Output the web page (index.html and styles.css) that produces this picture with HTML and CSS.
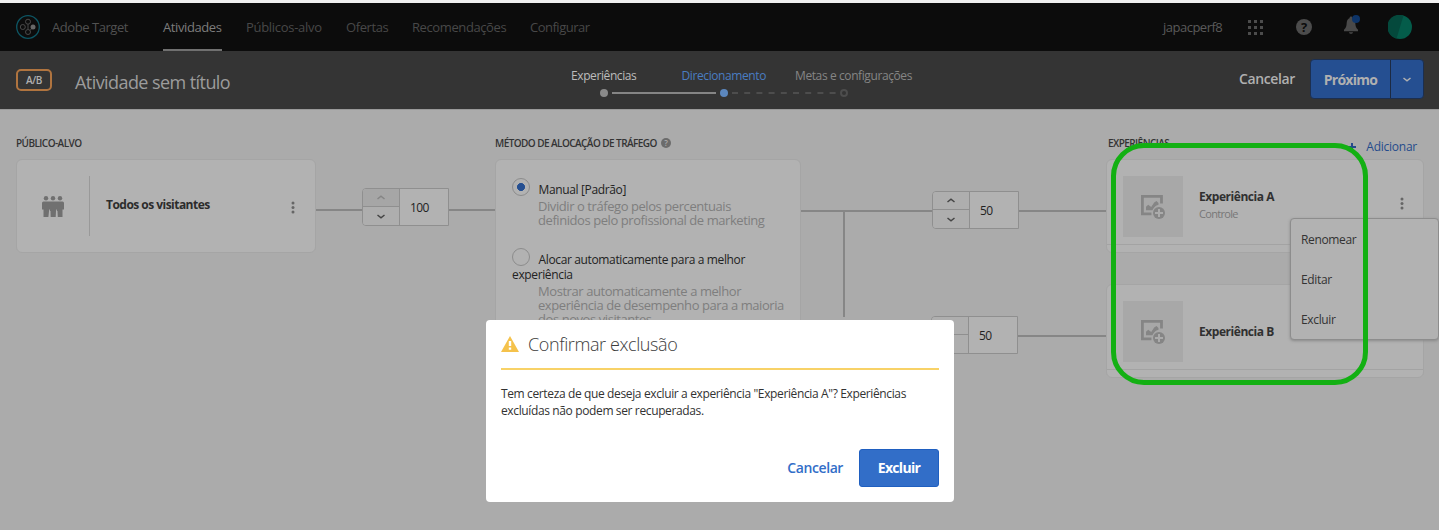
FILE: index.html
```html
<!DOCTYPE html>
<html lang="pt-BR">
<head>
<meta charset="utf-8">
<title>Adobe Target</title>
<link rel="stylesheet" href="styles.css">
</head>
<body>
<svg class="sprite" width="0" height="0">
  <symbol id="image-add" viewBox="0 0 24 24">
    <path fill="none" stroke="#858585" stroke-width="2.800" d="M10.5 18.9H1.4V1.4h19.1v7.2"/>
    <path fill="#858585" d="M5 15.200v-3.400l2.200-2 3 2.200 3-4.400 2.300-1.600 2 2v1.800c-3 .8-4.800 2.500-5.200 5.400z"/>
    <circle cx="18" cy="18" r="7.200" fill="#a8a8a8"/>
    <circle cx="18" cy="18" r="6" fill="#858585"/>
    <path stroke="#ababab" stroke-width="2" d="M18 14v8M14 18h8"/>
  </symbol>
  <symbol id="up" viewBox="0 0 8 5"><path fill="none" stroke="currentColor" stroke-width="1.500" d="M.5 4 4 1.200l3.500 2.800"/></symbol>
  <symbol id="down" viewBox="0 0 8 5"><path fill="none" stroke="currentColor" stroke-width="1.500" d="M.5 1 4 3.800 7.500 1"/></symbol>
  <symbol id="dots" viewBox="0 0 4 13"><g fill="#666"><circle cx="2" cy="2" r="1.500"/><circle cx="2" cy="6.500" r="1.500"/><circle cx="2" cy="11" r="1.500"/></g></symbol>
</svg>

<header class="topbar">
  <svg class="logo" viewBox="0 0 24 24" fill="none">
    <circle cx="12" cy="12" r="11.300" stroke="#0d5563" stroke-width="1.300"/>
    <g stroke="#4a4a4a" stroke-width="1"><circle cx="12" cy="6.700" r="2.500"/><circle cx="6.800" cy="12" r="2.500"/><circle cx="12" cy="17" r="2.500"/><path d="M12 9.200v5M14 15.400l1.500-1.600"/></g>
    <circle cx="17" cy="12" r="2.500" fill="#686868"/>
  </svg>
  <span class="brand">Adobe Target</span>
  <nav class="nav">
    <a class="nav-item active n1">Atividades</a><a class="nav-item n2">Públicos-alvo</a><a class="nav-item n3">Ofertas</a><a class="nav-item n4">Recomendações</a><a class="nav-item n5">Configurar</a>
  </nav>
  <span class="user">japacperf8</span>
  <svg class="apps" viewBox="0 0 15 15" fill="#4c4c4c"><path d="M0 0h3v3H0zM6 0h3v3H6zM12 0h3v3h-3zM0 6h3v3H0zM6 6h3v3H6zM12 6h3v3h-3zM0 12h3v3H0zM6 12h3v3H6zM12 12h3v3h-3z"/></svg>
  <span class="help">?</span>
  <svg class="bell" viewBox="0 0 18 20"><path fill="#494949" d="M2 14.800c2.200-2 2.500-3.800 2.700-7C4.900 5 6 3.800 7.500 3.200 7.500 1 10.500 1 10.500 3.200c1.500.6 2.600 1.800 2.800 4.600.2 3.200.5 5 2.700 7v1.400H2zM7 17.300h4c-.3 2-3.700 2-4 0z"/><circle cx="14" cy="4" r="4" fill="#0d3468"/></svg>
  <svg class="avatar" viewBox="0 0 24 24"><circle cx="12" cy="12" r="12" fill="#045c4a"/><path fill="#04493c" d="M15.500.6A12 12 0 1 0 8.500 23.500z"/></svg>
</header>

<section class="titlebar">
  <span class="badge">A/B</span>
  <h1 class="title">Atividade sem título</h1>
  <div class="steps">
    <div class="step-labels"><span class="s1">Experiências</span><span class="s2">Direcionamento</span><span class="s3">Metas e configurações</span></div>
    <div class="track"><i class="dot"></i><i class="solid"></i><i class="dot current"></i><svg class="dash" viewBox="0 0 104 2"><path stroke="#4d4d4d" stroke-width="2" stroke-dasharray="6 6.200" d="M0 1h104"/></svg><i class="dot todo"></i></div>
  </div>
  <span class="cancel">Cancelar</span>
  <div class="split"><span class="next">Próximo</span><span class="more"><svg width="8" height="5"><use href="#down"/></svg></span></div>
</section>

<main class="flow">
  <section class="col-audience">
    <h2 class="label">PÚBLICO-ALVO</h2>
    <div class="card audience">
      <div class="people"><svg width="22" height="21" viewBox="0 0 22 21" fill="#707070"><circle cx="4" cy="2.300" r="2.200"/><circle cx="11" cy="2.300" r="2.200"/><circle cx="18" cy="2.300" r="2.200"/><path d="M1.500 5.500h19q1.500 0 1.500 1.500v6.500h-1.500V21h-5v-6h-.8v6H8.500v-6h-.8v6H1.500v-7.500H0V7q0-1.500 1.500-1.500z"/><path fill="#b2b2b2" d="M7.200 13.500h.7l.4 7.500H6.400zM14.100 13.500h.7l.8 7.500h-1.900z"/></svg></div>
      <strong class="audience-name">Todos os visitantes</strong>
      <svg class="menu-dots" width="4" height="13"><use href="#dots"/></svg>
    </div>
  </section>

  <div class="link-in">
    <div class="spinner"><div class="arrows"><span class="disabled"><svg width="8" height="5"><use href="#up"/></svg></span><span><svg width="8" height="5"><use href="#down"/></svg></span></div><span class="value">100</span></div>
  </div>

  <section class="col-method">
    <h2 class="label">MÉTODO DE ALOCAÇÃO DE TRÁFEGO <span class="mini-help">?</span></h2>
    <div class="card method">
      <div class="option"><i class="radio on"></i><span>Manual [Padrão]</span></div>
      <p class="hint">Dividir o tráfego pelos percentuais<br>definidos pelo profissional de marketing</p>
      <div class="option second"><i class="radio"></i><span>Alocar automaticamente para a melhor</span><br><span>experiência</span></div>
      <p class="hint">Mostrar automaticamente a melhor<br>experiência de desempenho para a maioria<br>dos novos visitantes</p>
    </div>
  </section>

  <div class="links-out">
    <div class="branch first">
      <div class="spinner"><div class="arrows"><span><svg width="8" height="5"><use href="#up"/></svg></span><span><svg width="8" height="5"><use href="#down"/></svg></span></div><span class="value">50</span></div>
    </div>
    <div class="stem"></div>
    <div class="branch last">
      <div class="spinner"><div class="arrows"><span><svg width="8" height="5"><use href="#up"/></svg></span><span><svg width="8" height="5"><use href="#down"/></svg></span></div><span class="value">50</span></div>
    </div>
  </div>

  <section class="col-exp">
    <div class="exp-head"><h2 class="label">EXPERIÊNCIAS</h2><span class="add"><svg width="8" height="8"><path stroke="#254b8c" stroke-width="2" d="M4 0v8M0 4h8"/></svg><span>Adicionar</span></span></div>
    <div class="card exp">
      <div class="exp-body"><div class="thumb"><svg width="24" height="24"><use href="#image-add"/></svg></div><div class="exp-text"><strong>Experiência A</strong><small>Controle</small></div><svg class="exp-dots" width="4" height="13"><use href="#dots"/></svg></div>
    </div>
    <div class="card exp">
      <div class="exp-body"><div class="thumb"><svg width="24" height="24"><use href="#image-add"/></svg></div><div class="exp-text"><strong>Experiência B</strong></div></div>
    </div>
  </section>
</main>

<ul class="menu"><li>Renomear</li><li>Editar</li><li>Excluir</li></ul>
<div class="highlight"></div>

<div class="dialog" role="dialog">
  <div class="dialog-head"><svg width="18" height="16" viewBox="0 0 18 16"><path fill="#f5c24b" d="M9 0l9 16H0z"/><path fill="#fff" d="M7.800 5h2.400v5H7.800zM7.800 11.600h2.400v2.200H7.800z"/></svg><span>Confirmar exclusão</span></div>
  <p class="dialog-text">Tem certeza de que deseja excluir a experiência "Experiência A"? Experiências<br>excluídas não podem ser recuperadas.</p>
  <div class="dialog-actions"><span class="dialog-cancel">Cancelar</span><span class="dialog-delete">Excluir</span></div>
</div>
</body>
</html>
```
FILE: styles.css
```css
* { box-sizing: border-box; }
body {
  margin: 0; height: 530px; overflow: hidden; position: relative;
  display: flex; flex-direction: column;
  background: #ababab; color: #2c2c2c;
  font: 13px/15px "Open Sans", "Noto Sans", sans-serif; letter-spacing: -0.4px;
  white-space: nowrap;
}
h1, h2, p, ul { margin: 0; padding: 0; }
svg, i { display: block; flex: none; }
.sprite { position: absolute; }

.topbar { flex: none; height: 51px; border-top: 3px solid #f0f0f0; background: #0c0c0c; display: flex; align-items: center; padding: 0 27px 0 16px; color: #484848; }
.logo { width: 24px; height: 24px; }
.brand { width: 111px; padding-left: 12px; color: #515151; letter-spacing: -0.45px; }
.nav { display: flex; align-self: stretch; gap: 24px; margin-left: 12px; flex: 1; }
.nav-item { height: 48px; line-height: 48px; }
.nav-item.active { color: #7c7c7c; border-bottom: 2px solid #707070; }
.n1 { width: 59px; } .n2 { width: 76px; letter-spacing: -0.3px; } .n3 { width: 42px; } .n4 { width: 94px; } .n5 { width: 60px; letter-spacing: -0.5px; }
.user { width: 85px; color: #5a5a5a; letter-spacing: -0.5px; }
.apps { width: 15px; height: 15px; }
.help { width: 16px; height: 16px; margin-left: 33px; border-radius: 50%; background: #4c4c4c; color: #0c0c0c; font-weight: 700; text-align: center; line-height: 16px; }
.bell { width: 18px; height: 20px; margin: -4px 0 0 30px; }
.avatar { width: 24px; height: 24px; margin-left: 28px; }

.titlebar { flex: none; height: 59px; background: #343434; border-bottom: 1px solid #999; display: flex; padding: 0 15px 0 16px; color: #b0b0b0; }
.badge { flex: none; width: 36px; height: 22px; margin-top: 18px; border: 2px solid #b0743f; border-radius: 5px; font-size: 10px; font-weight: 600; line-height: 18px; text-align: center; }
.title { flex: none; width: 496px; padding-left: 23px; font-size: 18px; font-weight: 400; line-height: 62px; letter-spacing: -0.57px; color: #9c9c9c; }
.steps { flex: none; width: 341px; margin: 17px 0 0 23px; font-size: 12px; }
.step-labels { display: flex; }
.step-labels span { flex: none; }
.s1 { width: 110.5px; color: #bcbcbc; } .s2 { width: 113.5px; color: #4a7dc2; } .s3 { color: #858585; }
.track { display: flex; align-items: center; margin: 6px 0 0 29px; }
.dot { width: 8px; height: 8px; border-radius: 50%; background: #8a8a8a; }
.current { background: #5c87bd; }
.todo { background: none; border: 2px solid #4d4d4d; }
.solid { width: 104px; height: 2px; margin: 0 4px; background: #858585; }
.dash { width: 104px; height: 2px; margin: 0 4px; }
.cancel { flex: none; width: 71px; margin-left: 327px; font-size: 14px; font-weight: 600; line-height: 55px; }
.split { flex: none; display: flex; width: 114px; height: 40px; margin-top: 8px; border: 1px solid #1c2f50; border-radius: 4px; overflow: hidden; background: #254f91; }
.next { width: 80px; border-right: 1px solid #1c2a42; text-align: center; font-size: 14px; font-weight: 700; line-height: 40px; letter-spacing: -0.7px; }
.more { flex: 1; display: grid; place-items: center; }

.flow { flex: 1; display: flex; padding: 27px 0 0 16px; }
.label { height: 22px; font-size: 10px; font-weight: 600; line-height: 13px; letter-spacing: -0.56px; color: #333; }
.card { background: #b2b2b2; border: 1px solid #a5a5a5; border-radius: 6px; }
.col-audience { width: 300px; }
.audience { height: 94px; display: flex; align-items: center; padding: 0 20px 0 0; }
.people { width: 73px; height: 60px; border-right: 1px solid #999; display: grid; place-items: center; }
.audience-name { flex: 1; margin: -3px 0 0 16px; font-size: 12px; font-weight: 700; letter-spacing: -0.53px; }
.menu-dots { margin-top: 3px; }
.link-in { width: 179px; height: 39px; margin-top: 51px; padding-left: 46px; background: linear-gradient(#868686, #868686) 0 21px / 100% 2px no-repeat; }
.spinner { display: flex; width: 87px; height: 38px; border: 1px solid #8f8f8f; border-radius: 4px 0 0 4px; background: #b2b2b2; color: #444; overflow: hidden; }
.arrows { width: 37px; border-right: 1px solid #8f8f8f; background: #aeaeae; display: grid; grid-template-rows: 1fr 1fr; }
.arrows span { display: grid; place-items: center; }
.arrows span:first-child { border-bottom: 1px solid #8f8f8f; }
.arrows .disabled { background: #a6a6a6; color: #858585; }
.value { padding-left: 10px; line-height: 37px; font-size: 12px; letter-spacing: -0.6px; color: #222; }

.col-method { width: 306px; }
.mini-help { display: inline-block; width: 10px; height: 10px; margin-left: 2px; border-radius: 50%; background: #6b6b6b; color: #ababab; font-size: 8px; line-height: 10px; text-align: center; vertical-align: 1px; }
.method { height: 260px; padding: 18px 16px; color: #222; }
.option .radio { display: inline-block; width: 18px; height: 18px; margin-right: 8.5px; border: 1px solid #8c8c8c; border-radius: 50%; vertical-align: -2px; }
.radio.on { background: radial-gradient(circle, #254f91 3.7px, transparent 4.3px); }
.option { height: 20px; font-size: 12px; line-height: 15px; letter-spacing: -0.36px; }
.second { margin-top: 21px; height: 35px; }
.hint { padding-left: 26px; font-size: 13px; line-height: 14px; color: #7e7e7e; margin-top: 1px; letter-spacing: -0.43px; }

.links-out { width: 305px; margin-top: 54px; display: flex; flex-direction: column; }
.branch { height: 38px; background: linear-gradient(#868686, #868686) 0 19px / 100% 2px no-repeat; }
.first { padding-left: 131px; }
.stem { width: 2px; height: 106px; margin: -18px 0 -1px 42px; background: #868686; }
.last { margin-left: 42px; padding-left: 88px; }

.col-exp { width: 318px; }
.exp-head { display: flex; justify-content: space-between; padding: 0 7px 0 2px; }
.add { display: flex; align-items: center; gap: 10px; height: 19px; font-size: 12px; letter-spacing: -0.25px; color: #254b8c; }
.exp { height: 94px; padding-bottom: 7px; }
.exp + .exp { margin-top: 31px; }
.exp-body { height: 85px; border-bottom: 1px solid #a3a3a3; display: flex; padding: 16px 19px 0 16px; }
.thumb { width: 60px; height: 61px; background: #a8a8a8; display: grid; place-items: center; }
.exp-text { flex: 1; padding: 13px 0 0 16px; display: flex; flex-direction: column; gap: 2px; }
.exp + .exp .exp-text { padding-top: 23px; }
.exp-text strong { font-size: 12px; font-weight: 700; letter-spacing: -0.45px; color: #303030; }
.exp-text small { font-size: 11px; color: #777; letter-spacing: -0.7px; }
.exp-dots { margin-top: 21px; }

.menu { position: absolute; left: 1290px; top: 218px; width: 149px; height: 122px; padding-top: 1px; list-style: none; background: #b2b2b2; border: 1px solid #8d8d8d; border-radius: 4px; box-shadow: 0 1px 3px #888; font-size: 12px; line-height: 40px; letter-spacing: -0.35px; color: #333; }
.menu li { height: 40px; padding-left: 10px; }
.highlight { position: absolute; left: 1111px; top: 143px; width: 257px; height: 242px; border: 5px solid #13b013; border-radius: 33px; }

.dialog { position: absolute; left: 486px; top: 320px; width: 468px; height: 182px; padding: 0 15px; border-radius: 4px; background: #fff; color: #323232; }
.dialog-head { display: flex; align-items: center; gap: 9px; height: 50px; border-bottom: 2px solid #f8d267; font-size: 18px; font-weight: 300; line-height: 48px; color: #3c3c3c; }
.dialog-text { margin-top: 15px; font-size: 12px; line-height: 17px; letter-spacing: -0.37px; }
.dialog-actions { display: flex; justify-content: flex-end; align-items: center; gap: 16px; margin-top: 30px; font-size: 14px; font-weight: 600; color: #326ec8; }
.dialog-cancel { margin-top: -1px; }
.dialog-delete { width: 80px; height: 38px; border: 1px solid #1f5fc0; border-radius: 3px; background: #326ec8; color: #fff; text-align: center; line-height: 36px; font-weight: 700; letter-spacing: -0.7px; }
```
